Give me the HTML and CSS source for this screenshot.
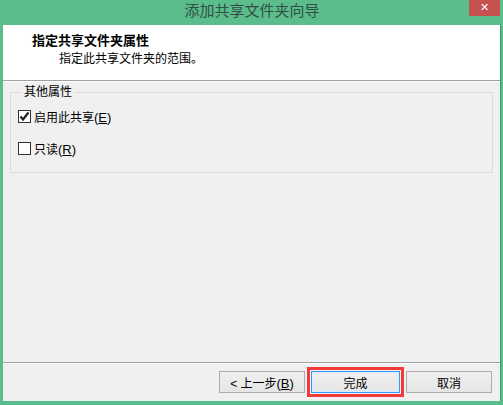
FILE: index.html
```
<!DOCTYPE html>
<html lang="zh-CN">
<head>
    <meta charset="UTF-8">
    <title>添加共享文件夹向导</title>
    <link rel="stylesheet" href="styles.css">
</head>
<body>
    <div class="window">
        <div class="titlebar">
            <span class="title">添加共享文件夹向导</span>
            <button type="button" class="closeButton">&#x2715;</button>
        </div>

        <div class="client">
            <div class="header">
                <div class="headTitle">指定共享文件夹属性</div>
                <div class="headSub">指定此共享文件夹的范围。</div>
            </div>

            <div class="content">
                <fieldset class="groupBox">
                    <legend>其他属性</legend>
                    <label class="check">
                        <span class="box checked">
                            <svg width="11" height="11" viewBox="0 0 11 11"><path d="M1.5 5.5 L4 8.5 L9.5 1.5" fill="none" stroke="#222" stroke-width="2.2"/></svg>
                        </span>
                        <span>启用此共享<span class="key">(<u>E</u>)</span></span>
                    </label>
                    <label class="check">
                        <span class="box"></span>
                        <span>只读<span class="key">(<u>R</u>)</span></span>
                    </label>
                </fieldset>
            </div>

            <div class="footer">
                <button type="button" class="btn">&lt; 上一步<span class="key">(<u>B</u>)</span></button>
                <span class="highlight">
                    <button type="button" class="btn btnDefault">完成</button>
                </span>
                <button type="button" class="btn">取消</button>
            </div>
        </div>
    </div>
</body>
</html>
```

FILE: styles.css
```
html, body {
    margin: 0;
    padding: 0;
}

body {
    font-family: "Liberation Sans", "Noto Sans CJK SC", sans-serif;
    font-size: 12px;
    color: #000;
    background: #5cbd8c;
    text-autospace: no-autospace;
}

.window {
    width: 503px;
    height: 405px;
    box-sizing: border-box;
    background: #5cbd8c;
    display: flex;
    flex-direction: column;
    padding: 0 2px 4px 3px;
}

.titlebar {
    height: 25px;
    flex: none;
    display: flex;
    justify-content: center;
    align-items: flex-start;
    position: relative;
}

.title {
    font-size: 15px;
    line-height: 22px;
    color: #2f4f44;
}

.closeButton {
    position: absolute;
    top: 0;
    right: 1px;
    width: 31px;
    height: 16px;
    padding: 0;
    border: none;
    background: #c75050;
    color: #fff;
    font-size: 11px;
    font-weight: bold;
    line-height: 16px;
    font-family: "DejaVu Sans", sans-serif;
}

.client {
    flex: 1;
    display: flex;
    flex-direction: column;
    background: #f0f0f0;
    border-right: 1px solid #3f9a6c;
}

.header {
    height: 56px;
    flex: none;
    background: #fff;
    border-bottom: 1px solid #a0a0a0;
    box-shadow: 0 1px 0 #fff;
    box-sizing: border-box;
    padding: 7px 0 0 29px;
}

.headTitle {
    font-weight: bold;
    font-size: 13px;
    line-height: 18px;
}

.headSub {
    padding-left: 27px;
    line-height: 18px;
}

.content {
    flex: 1;
    padding: 3px 7px 0 7px;
}

.groupBox {
    margin: 0;
    height: 89px;
    box-sizing: border-box;
    border: 1px solid #dcdcdc;
    padding: 7px 0 0 7px;
}

.groupBox legend {
    padding: 0 2px;
    margin-left: 4px;
    line-height: 16px;
}

.check {
    display: flex;
    align-items: center;
    gap: 3px;
    height: 18px;
    margin-bottom: 14px;
}

.box {
    width: 11px;
    height: 11px;
    border: 1px solid #333;
    background: #fff;
    display: flex;
    align-items: center;
    justify-content: center;
}

.key {
    font-family: "Liberation Sans", sans-serif;
    font-size: 13px;
}

u {
    text-decoration: underline;
    text-underline-offset: 1px;
}

.footer {
    height: 38px;
    flex: none;
    border-top: 1px solid #a0a0a0;
    box-shadow: inset 0 1px 0 #fff;
    display: flex;
    align-items: center;
    justify-content: flex-end;
    padding-right: 8px;
    gap: 2px;
}

.btn {
    width: 86px;
    height: 22px;
    box-sizing: border-box;
    font-family: inherit;
    font-size: 12px;
    border: 1px solid #acacac;
    background: linear-gradient(#f0f0f0, #e5e5e5);
    padding: 0;
    color: #000;
}

.highlight {
    border: 3px solid #f23a3a;
    padding: 1px;
    display: flex;
}

.btnDefault {
    width: 89px;
    border: 1px solid #3399ff;
    box-shadow: inset 0 0 0 1px #dcecfc;
}
```
